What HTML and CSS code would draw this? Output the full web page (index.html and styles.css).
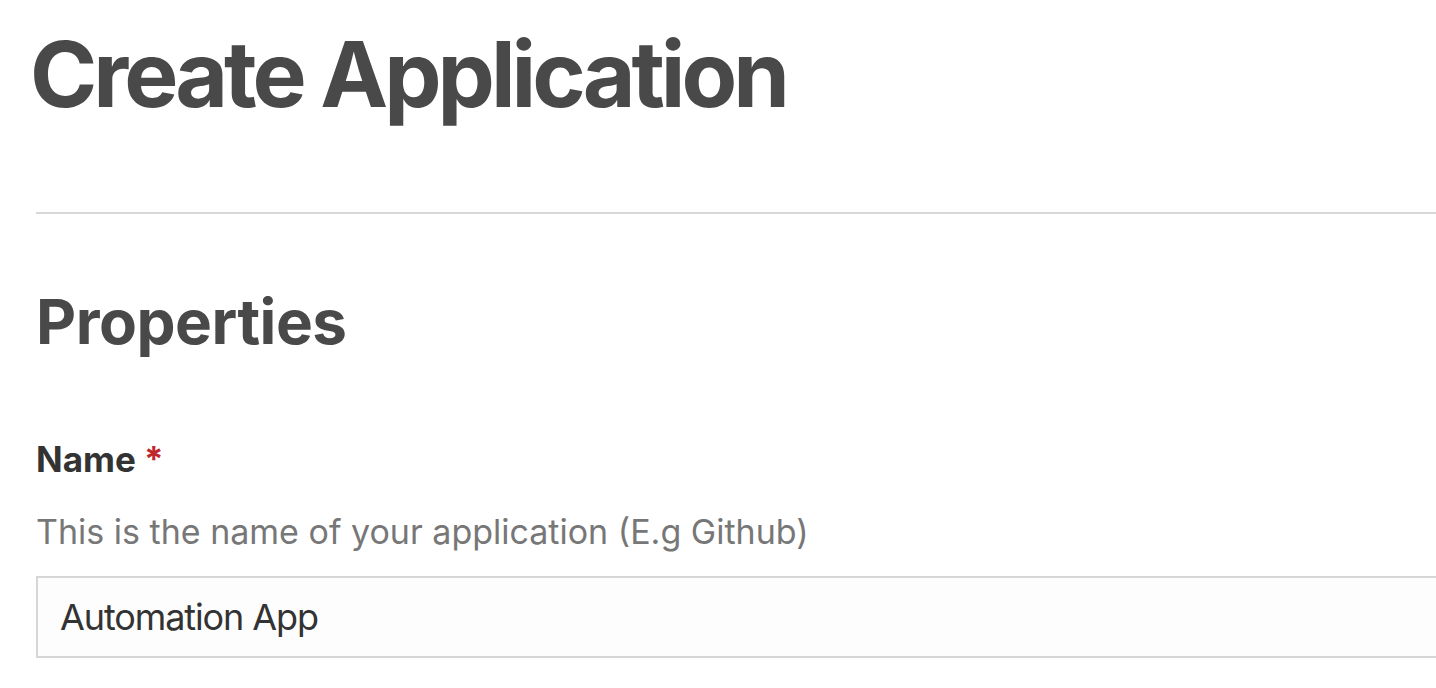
FILE: index.html
```html
<!DOCTYPE html>
<html lang="en">
<head>
<meta charset="utf-8">
<title>Create Application</title>
<link rel="stylesheet" href="styles.css">
</head>
<body>
<main class="page">
  <h1 class="page-title">Create Application</h1>
  <hr class="divider">
  <section class="section">
    <h2 class="section-title">Properties</h2>
    <div class="field">
      <label class="field-label" for="app-name">Name <span class="required">*</span></label>
      <p class="field-help">This is the name of your application (E.g Github)</p>
      <input class="field-input" id="app-name" type="text" value="Automation App">
    </div>
  </section>
</main>
</body>
</html>
```

FILE: styles.css
```css
html, body {
  margin: 0;
  padding: 0;
  background: #ffffff;
  overflow: hidden;
}

body {
  font-family: Inter, "Liberation Sans", Arial, sans-serif;
  color: #333333;
}

.page {
  padding: 29px 0 0 36px;
  margin-right: -40px;
}

.page-title {
  margin: 0 0 0 -6px;
  font-size: 91px;
  line-height: 91px;
  font-weight: 700;
  color: #494949;
  letter-spacing: -4px;
}

.divider {
  margin: 92px 0 0 0;
  border: 0;
  height: 2px;
  background: #d8d8d8;
}

.section-title {
  margin: 77px 0 0 0;
  font-size: 62px;
  line-height: 62px;
  font-weight: 700;
  color: #494949;
  letter-spacing: -0.5px;
}

.field {
  display: flex;
  flex-direction: column;
}

.field-label {
  margin-top: 86px;
  font-size: 35px;
  line-height: 40px;
  font-weight: 700;
  color: #333333;
}

.required {
  color: #c0272d;
}

.field-help {
  margin: 33px 0 0 0;
  font-size: 34px;
  line-height: 40px;
  color: #777777;
}

.field-input {
  box-sizing: border-box;
  margin: 24px 0 0 0;
  height: 82px;
  width: 100%;
  border: 2px solid #d6d6d6;
  border-radius: 0;
  background: #fdfdfd;
  padding: 0 22px;
  font-family: Inter, "Liberation Sans", Arial, sans-serif;
  font-size: 36px;
  letter-spacing: -1.1px;
  color: #333333;
  outline: none;
}
```
